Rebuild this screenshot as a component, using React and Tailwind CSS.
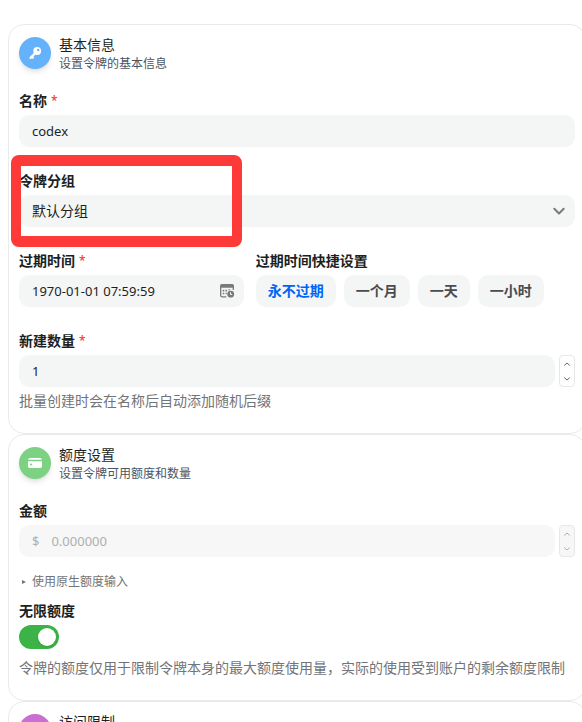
/* eslint-disable react/prop-types */
import { useState } from "react";

const quickExpiry = ["永不过期", "一个月", "一天", "一小时"];

const inputClass =
  "w-full min-w-0 bg-transparent text-[13px] leading-5 text-[#1c1f23] outline-none";

const KeyIcon = () => (
  <svg width="16" height="16" viewBox="0 0 16 16" fill="none">
    <circle cx="10.2" cy="6" r="3.900" fill="#fff" />
    <circle cx="11.200" cy="5" r="1.200" fill="#65b2fc" />
    <path
      d="M8 8.400 3.500 12.900M4.800 11.600l1 1"
      stroke="#fff"
      strokeWidth="2.200"
      strokeLinecap="round"
    />
  </svg>
);

const CardIcon = () => (
  <svg width="16" height="16" viewBox="0 0 16 16">
    <path
      d="M3 3h10a1.900 1.900 0 0 1 1.900 1.700H1.100A1.900 1.900 0 0 1 3 3ZM1 6.200h14v5.100a1.700 1.700 0 0 1-1.700 1.700H2.700A1.700 1.700 0 0 1 1 11.300Z"
      fill="#fff"
    />
    <path d="M3 8.700h2.200v1.600H3z" fill="#7dd182" />
  </svg>
);

const LinkIcon = () => (
  <svg
    width="16"
    height="16"
    viewBox="0 0 24 24"
    fill="none"
    stroke="#fff"
    strokeWidth="3"
    strokeLinecap="round"
  >
    <path d="M10 13a5 5 0 0 0 7.500.5l3-3a5 5 0 0 0-7-7l-1.700 1.700" />
    <path d="M14 11a5 5 0 0 0-7.500-.5l-3 3a5 5 0 0 0 7 7l1.700-1.700" />
  </svg>
);

const CalendarClockIcon = () => (
  <svg width="16" height="16" viewBox="0 0 16 16" className="shrink-0">
    <path
      d="M1.700 4v8.200a1.600 1.600 0 0 0 1.600 1.600h4M14.300 7V3"
      fill="none"
      stroke="#77797c"
      strokeWidth="1.300"
    />
    <path d="M1 4.800V2.800A1.800 1.800 0 0 1 2.800 1h10.400A1.800 1.800 0 0 1 15 2.800v2Z" fill="#77797c" />
    <path
      d="M6.500 6.800h1.600v1.600H6.500zM9.500 6.200h1.600v1H9.500zM3.700 9.700h1.600v1.600H3.700zM6.500 9.700h1.200v1.600H6.500zM3.700 6.800h1.600v1.600H3.700z"
      fill="#77797c"
    />
    <circle cx="11.700" cy="11.200" r="3.400" fill="#77797c" />
    <path d="M11.500 9.200v2.300h1.700" fill="none" stroke="#f4f5f5" strokeWidth="1" />
  </svg>
);

const Chevron = ({ up }) => (
  <svg
    width="8"
    height="8"
    viewBox="0 0 8 8"
    fill="none"
    stroke="currentColor"
    strokeWidth="1"
    strokeLinecap="round"
    strokeLinejoin="round"
  >
    <path d={up ? "M1.500 5.200 4 3l2.500 2.200" : "M1.500 2.800 4 5l2.500-2.200"} />
  </svg>
);

const SelectArrow = () => (
  <svg
    width="16"
    height="16"
    viewBox="0 0 16 16"
    fill="none"
    stroke="#77797c"
    strokeWidth="2"
    strokeLinecap="round"
    strokeLinejoin="round"
  >
    <path d="M3.300 5.800 8 10.500l4.700-4.700" />
  </svg>
);

const Card = ({ icon, color, title, description, children }) => (
  <section className="rounded-2xl border border-[#e9eaea] bg-white p-2.5">
    <header className="mb-1.5 flex items-start gap-2">
      <span
        className={`mt-0.5 flex size-8 shrink-0 items-center justify-center rounded-full shadow-md ${color}`}
      >
        {icon}
      </span>
      <div>
        <h2 className="text-sm leading-5 text-[#1c1f23]">{title}</h2>
        <p className="text-xs leading-[18px] text-[#4b5563]">{description}</p>
      </div>
    </header>
    {children}
  </section>
);

const Label = ({ htmlFor, required, children }) => (
  <label
    htmlFor={htmlFor}
    className="mb-1 flex gap-1 text-sm leading-5 font-bold text-[#1c1f23]"
  >
    {children}
    {required && <span className="text-xs leading-5 font-medium text-[#f93920]">*</span>}
  </label>
);

const Stepper = ({ onUp, onDown, disabled }) => (
  <div
    className={`flex h-8 w-4 shrink-0 flex-col rounded-sm border border-[#e6e7e8] ${
      disabled ? "bg-[#f7f7f7] text-[#aeafb0]" : "bg-white text-[#66686c]"
    }`}
  >
    <button
      type="button"
      aria-label="+"
      disabled={disabled}
      onClick={onUp}
      className="flex flex-1 items-center justify-center"
    >
      <Chevron up />
    </button>
    <button
      type="button"
      aria-label="-"
      disabled={disabled}
      onClick={onDown}
      className="flex flex-1 items-center justify-center"
    >
      <Chevron />
    </button>
  </div>
);

const App = () => {
  const [name, setName] = useState("codex");
  const [expiry, setExpiry] = useState("1970-01-01 07:59:59");
  const [count, setCount] = useState(1);
  const [unlimited, setUnlimited] = useState(true);

  return (
    <div className="h-screen overflow-hidden bg-white pt-6 pl-2 font-['Noto_Sans','Noto_Sans_CJK_SC',sans-serif]">
      <form className="-mr-1">
        <Card
          icon={<KeyIcon />}
          color="bg-[#65b2fc]"
          title="基本信息"
          description="设置令牌的基本信息"
        >
          <div className="py-3">
            <Label htmlFor="name" required>
              名称
            </Label>
            <div className="flex h-8 items-center rounded-[10px] border border-transparent bg-[#f4f5f5] px-3">
              <input
                id="name"
                value={name}
                onChange={(e) => setName(e.target.value)}
                className={inputClass}
              />
            </div>
          </div>

          <div className="relative py-3">
            <Label htmlFor="group">令牌分组</Label>
            <div className="relative">
              <select
                id="group"
                className="h-8 w-full appearance-none rounded-[10px] border border-transparent bg-[#f4f5f5] px-3 text-sm text-[#1c1f23] outline-none"
              >
                <option>默认分组</option>
              </select>
              <span className="pointer-events-none absolute inset-y-0 right-2 flex items-center">
                <SelectArrow />
              </span>
            </div>
            {/* highlight around the group select */}
            <div className="pointer-events-none absolute -top-1 -left-2 h-[92px] w-[231px] rounded-lg border-x-[10px] border-y-[11px] border-[#fd3a38]" />
          </div>

          <div className="-mx-1.5 flex">
            <div className="w-5/12 px-1.5 py-3">
              <Label htmlFor="expiry" required>
                过期时间
              </Label>
              <div className="flex h-8 items-center rounded-[10px] border border-transparent bg-[#f4f5f5] pr-2 pl-3">
                <input
                  id="expiry"
                  value={expiry}
                  onChange={(e) => setExpiry(e.target.value)}
                  className={inputClass}
                />
                <CalendarClockIcon />
              </div>
            </div>
            <div className="w-7/12 px-1.5 py-3">
              <p className="mb-1 text-sm leading-5 font-bold text-[#1c1f23]">
                过期时间快捷设置
              </p>
              <div className="flex gap-2">
                {quickExpiry.map((text, index) => (
                  <button
                    key={text}
                    type="button"
                    className={`h-8 rounded-[10px] bg-[#f4f5f5] px-3 text-sm font-bold whitespace-nowrap ${
                      index === 0 ? "text-[#0064fa]" : "text-[#494c4f]"
                    }`}
                  >
                    {text}
                  </button>
                ))}
              </div>
            </div>
          </div>

          <div className="py-3">
            <Label htmlFor="count" required>
              新建数量
            </Label>
            <div className="flex gap-1">
              <div className="flex h-8 flex-1 items-center rounded-[10px] border border-transparent bg-[#f4f5f5] px-3">
                <input
                  id="count"
                  inputMode="numeric"
                  value={count}
                  onChange={(e) => setCount(Number(e.target.value) || 1)}
                  className={inputClass}
                />
              </div>
              <Stepper
                onUp={() => setCount(count + 1)}
                onDown={() => setCount(Math.max(1, count - 1))}
              />
            </div>
            <p className="mt-1 text-sm leading-5 text-[#727477]">
              批量创建时会在名称后自动添加随机后缀
            </p>
          </div>
        </Card>

        <Card
          icon={<CardIcon />}
          color="bg-[#7dd182]"
          title="额度设置"
          description="设置令牌可用额度和数量"
        >
          <div className="py-3">
            <Label htmlFor="amount">金额</Label>
            <div className="flex gap-1">
              <div className="flex h-8 flex-1 items-center gap-3 rounded-[10px] border border-transparent bg-[#f7f7f7] px-3 text-[13px] leading-5 text-[#aeafb0]">
                <span>$</span>
                <input
                  id="amount"
                  disabled={unlimited}
                  placeholder="0.000000"
                  className={`${inputClass} placeholder:text-[#aeafb0]`}
                />
              </div>
              <Stepper disabled={unlimited} />
            </div>
          </div>

          <button
            type="button"
            className="flex h-[26px] items-center gap-1 text-xs text-[#727477]"
          >
            <svg width="9" height="8" viewBox="0 0 9 8" fill="currentColor">
              <path d="M3 2 7 4 3 6Z" />
            </svg>
            使用原生额度输入
          </button>

          <div className="pt-1.5 pb-3">
            <Label htmlFor="unlimited">无限额度</Label>
            <input
              id="unlimited"
              type="checkbox"
              role="switch"
              checked={unlimited}
              onChange={(e) => setUnlimited(e.target.checked)}
              className="block h-6 w-10 appearance-none rounded-full bg-gray-300 p-[3px] before:block before:size-[18px] before:rounded-full before:bg-white before:shadow before:content-[''] checked:bg-[#3bb346] checked:before:ml-4"
            />
            <p className="mt-[9px] text-sm leading-5 text-[#727477]">
              令牌的额度仅用于限制令牌本身的最大额度使用量，实际的使用受到账户的剩余额度限制
            </p>
          </div>
        </Card>

        <Card
          icon={<LinkIcon />}
          color="bg-[#c96fd1]"
          title="访问限制"
          description="设置令牌的访问限制"
        />
      </form>
    </div>
  );
};

export default App;
